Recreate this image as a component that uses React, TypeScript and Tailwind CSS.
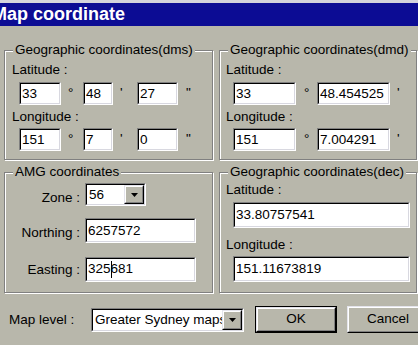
import type { ReactNode } from 'react';

const BG = 'bg-[#b8b7ab]';

function Sunken({ className = '', children }: { className?: string; children?: ReactNode }) {
  return (
    <div className={`border border-t-[#808080] border-l-[#808080] border-r-white border-b-white ${className}`}>
      <div className="flex h-full items-center overflow-hidden whitespace-nowrap border border-t-black border-l-black border-r-[#d8d8e0] border-b-[#d8d8e0] bg-white leading-[16px]">
        {children}
      </div>
    </div>
  );
}

function Raised({ className = '', children }: { className?: string; children?: ReactNode }) {
  return (
    <div className={`border border-t-[#e4e4ec] border-l-[#e4e4ec] border-r-black border-b-black ${className}`}>
      <div className={`flex h-full items-center justify-center border border-t-white border-l-white border-r-[#808080] border-b-[#808080] ${BG}`}>
        {children}
      </div>
    </div>
  );
}

function Arrow() {
  return (
    <svg width="7" height="4" viewBox="0 0 7 4">
      <polygon points="0,0 7,0 3.5,4" fill="#000" />
    </svg>
  );
}

function Combo({ className = '', text }: { className?: string; text: string }) {
  return (
    <Sunken className={className}>
      <span className="min-w-0 flex-1 overflow-hidden pl-[2px]">{text}</span>
      <Raised className="h-full w-[20px] shrink-0">
        <Arrow />
      </Raised>
    </Sunken>
  );
}

function Group({ title, className = '', children }: { title: string; className?: string; children?: ReactNode }) {
  return (
    <div className={`relative border border-[#808080] shadow-[inset_1px_1px_0_#fff,1px_1px_0_#fff] ${className}`}>
      <span className={`absolute left-[8px] top-[-9px] px-[2px] leading-[16px] ${BG}`}>{title}</span>
      {children}
    </div>
  );
}

const Sym = ({ c, w, pl }: { c: string; w: string; pl: string }) => (
  <span className={`${w} ${pl} mt-[3px] leading-[16px]`}>{c}</span>
);

export default function App() {
  return (
    <div className={`h-[345px] w-[418px] overflow-hidden ${BG} text-[13.5px] text-black font-['Liberation_Sans',Arial,sans-serif]`}>
      <div className="h-[3px] bg-[#d4d4dc]" />
      <div className="h-[23px] overflow-hidden bg-[#0c0c94] text-[18px] font-bold leading-[23px] text-white">
        <div className="-ml-[8px] whitespace-nowrap">Map coordinate</div>
      </div>

      <div className="grid grid-cols-[209px_198px] grid-rows-[110px_121px] gap-x-[6px] gap-y-[12px] px-[4px] pt-[24px]">
        {/* dms */}
        <Group title="Geographic coordinates(dms)">
          <div className="pl-[7px] pt-[11px]">
            <div className="leading-[16px]">Latitude :</div>
            <div className="ml-[7px] mt-[4px] flex items-start">
              <Sunken className="h-[23px] w-[42px]"><span className="pl-[1px]">33</span></Sunken>
              <Sym c="°" w="w-[22px]" pl="pl-[7px]" />
              <Sunken className="h-[23px] w-[30px]"><span className="pl-[1px]">48</span></Sunken>
              <Sym c="'" w="w-[24px]" pl="pl-[7px]" />
              <Sunken className="h-[23px] w-[41px]"><span className="pl-[1px]">27</span></Sunken>
              <Sym c={'"'} w="w-[20px]" pl="pl-[8px]" />
            </div>
            <div className="mt-[4px] leading-[16px]">Longitude :</div>
            <div className="ml-[7px] mt-[3px] flex items-start">
              <Sunken className="h-[23px] w-[42px]"><span className="pl-[1px]">151</span></Sunken>
              <Sym c="°" w="w-[22px]" pl="pl-[7px]" />
              <Sunken className="h-[23px] w-[30px]"><span className="pl-[1px]">7</span></Sunken>
              <Sym c="'" w="w-[24px]" pl="pl-[7px]" />
              <Sunken className="h-[23px] w-[41px]"><span className="pl-[1px]">0</span></Sunken>
              <Sym c={'"'} w="w-[20px]" pl="pl-[8px]" />
            </div>
          </div>
        </Group>

        {/* dmd */}
        <Group title="Geographic coordinates(dmd)">
          <div className="pl-[6px] pt-[11px]">
            <div className="leading-[16px]">Latitude :</div>
            <div className="ml-[7px] mt-[4px] flex items-start">
              <Sunken className="h-[23px] w-[63px]"><span className="pl-[1px]">33</span></Sunken>
              <Sym c="°" w="w-[21px]" pl="pl-[8px]" />
              <Sunken className="h-[23px] w-[73px]"><span className="pl-[1px]">48.454525</span></Sunken>
              <Sym c="'" w="w-[20px]" pl="pl-[7px]" />
            </div>
            <div className="mt-[4px] leading-[16px]">Longitude :</div>
            <div className="ml-[7px] mt-[3px] flex items-start">
              <Sunken className="h-[23px] w-[63px]"><span className="pl-[1px]">151</span></Sunken>
              <Sym c="°" w="w-[21px]" pl="pl-[8px]" />
              <Sunken className="h-[23px] w-[73px]"><span className="pl-[1px]">7.004291</span></Sunken>
              <Sym c="'" w="w-[20px]" pl="pl-[7px]" />
            </div>
          </div>
        </Group>

        {/* AMG */}
        <Group title="AMG coordinates">
          <div className="pt-[10px]">
            <div className="flex items-start">
              <span className="mt-[7px] w-[75px] text-right leading-[16px]">Zone :</span>
              <Combo className="ml-[5px] h-[23px] w-[61px]" text="56" />
            </div>
            <div className="mt-[12px] flex items-start">
              <span className="mt-[7px] w-[75px] text-right leading-[16px]">Northing :</span>
              <Sunken className="ml-[5px] h-[25px] w-[111px]"><span className="pl-[1px]">6257572</span></Sunken>
            </div>
            <div className="mt-[14px] flex items-start">
              <span className="mt-[5px] w-[75px] text-right leading-[16px]">Easting :</span>
              <Sunken className="ml-[5px] h-[25px] w-[111px]">
                <span className="pl-[1px]">
                  325
                  <span className="-mr-px inline-block h-[17px] w-px bg-black align-middle" />
                  681
                </span>
              </Sunken>
            </div>
          </div>
        </Group>

        {/* dec */}
        <Group title="Geographic coordinates(dec)">
          <div className="pl-[6px] pt-[9px]">
            <div className="leading-[16px]">Latitude :</div>
            <Sunken className="ml-[7px] mt-[4px] h-[26px] w-[177px]"><span className="pl-[1px]">33.80757541</span></Sunken>
            <div className="mt-[9px] leading-[16px]">Longitude :</div>
            <Sunken className="ml-[7px] mt-[3px] h-[26px] w-[177px]"><span className="pl-[1px]">151.11673819</span></Sunken>
          </div>
        </Group>
      </div>

      <div className="mt-[13px] flex h-[27px] items-center pl-[9px]">
        <span className="w-[82px] shrink-0 leading-[16px]">Map level :</span>
        <Combo className="h-[24px] w-[153px] shrink-0" text="Greater Sydney maps" />
        <div className="ml-[11px] h-[27px] w-[82px] shrink-0 border border-black">
          <Raised className="h-full w-full">OK</Raised>
        </div>
        <Raised className="ml-[10px] h-[27px] w-[82px] shrink-0">Cancel</Raised>
      </div>
    </div>
  );
}
